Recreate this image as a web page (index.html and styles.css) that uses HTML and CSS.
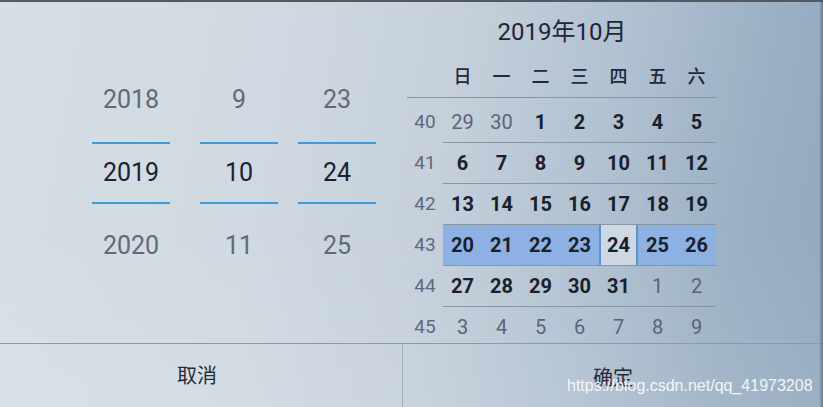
FILE: index.html
```html
<!DOCTYPE html>
<html lang="zh">
<head>
<meta charset="utf-8">
<title>日期选择</title>
<link rel="stylesheet" href="styles.css">
</head>
<body>
<div class="screen">
  <div class="topline"></div>
  <div class="main">
    <div class="pickers">
      <div class="col">
        <div class="item">2018</div>
        <div class="item sel">2019</div>
        <div class="item">2020</div>
      </div>
      <div class="col month">
        <div class="item">9</div>
        <div class="item sel">10</div>
        <div class="item">11</div>
      </div>
      <div class="col day">
        <div class="item">23</div>
        <div class="item sel">24</div>
        <div class="item">25</div>
      </div>
    </div>
    <div class="calendar">
      <div class="title">2019年10月</div>
      <div class="head">
        <div class="wk"></div>
        <div class="days">
          <span>日</span><span>一</span><span>二</span><span>三</span><span>四</span><span>五</span><span>六</span>
        </div>
      </div>
      <div class="week first">
        <div class="wk">40</div>
        <div class="days">
          <span class="other">29</span><span class="other">30</span><span>1</span><span>2</span><span>3</span><span>4</span><span>5</span>
        </div>
      </div>
      <div class="week">
        <div class="wk">41</div>
        <div class="days">
          <span>6</span><span>7</span><span>8</span><span>9</span><span>10</span><span>11</span><span>12</span>
        </div>
      </div>
      <div class="week">
        <div class="wk">42</div>
        <div class="days">
          <span>13</span><span>14</span><span>15</span><span>16</span><span>17</span><span>18</span><span>19</span>
        </div>
      </div>
      <div class="week current">
        <div class="wk">43</div>
        <div class="days">
          <span>20</span><span>21</span><span>22</span><span>23</span><span class="today">24</span><span>25</span><span>26</span>
        </div>
      </div>
      <div class="week">
        <div class="wk">44</div>
        <div class="days">
          <span>27</span><span>28</span><span>29</span><span>30</span><span>31</span><span class="other">1</span><span class="other">2</span>
        </div>
      </div>
      <div class="week last">
        <div class="wk">45</div>
        <div class="days">
          <span class="other">3</span><span class="other">4</span><span class="other">5</span><span class="other">6</span><span class="other">7</span><span class="other">8</span><span class="other">9</span>
        </div>
      </div>
    </div>
  </div>
  <div class="footer">
    <div class="btn cancel">取消</div>
    <div class="btn ok">确定</div>
  </div>
  <div class="watermark">https://blog.csdn.net/qq_41973208</div>
  <div class="bezel"></div>
</div>
</body>
</html>
```

FILE: styles.css
```css
html, body {
  margin: 0;
  padding: 0;
}

body {
  width: 823px;
  height: 407px;
  overflow: hidden;
  font-family: Roboto, "Noto Sans CJK SC", "Noto Sans", sans-serif;
}

.screen {
  position: relative;
  width: 823px;
  height: 407px;
  display: flex;
  flex-direction: column;
  background:
    linear-gradient(to bottom, rgba(255,255,255,0) 55%, rgba(255,255,255,0.10) 100%),
    linear-gradient(100deg, #d7dee5 0%, #d0d9e1 32%, #c5d0db 52%, #afc0d0 72%, #9aafc4 88%, #91a7bd 100%);
}

.topline {
  height: 2px;
  background: #525961;
  flex: none;
}

.main {
  display: flex;
  height: 341px;
  flex: none;
  overflow: hidden;
}

/* ---------- wheel pickers ---------- */
.pickers {
  width: 406px;
  flex: none;
  display: flex;
  padding: 77px 0 0 92px;
  box-sizing: border-box;
}

.col {
  width: 78px;
  display: flex;
  flex-direction: column;
  align-items: stretch;
}

.col.month {
  margin: 0 20px 0 30px;
}

.item {
  height: 42px;
  line-height: 42px;
  text-align: center;
  font-size: 25px;
  color: #626a75;
}

.item.sel {
  margin: 21px 0;
  height: 62px;
  line-height: 58px;
  box-sizing: border-box;
  border-top: 2px solid #3f9bd6;
  border-bottom: 2px solid #3f9bd6;
  color: #1d2130;
}

/* ---------- calendar ---------- */
.calendar {
  flex: 1;
  padding-top: 14px;
  padding-left: 1px;
}

.title {
  width: 310px;
  text-align: center;
  height: 32px;
  line-height: 32px;
  font-size: 24px;
  color: #20253a;
}

.head {
  display: flex;
  width: 310px;
  margin-top: 8px;
  height: 41px;
  border-bottom: 1px solid #8a95a2;
}

.head .days span {
  font-size: 18px;
  font-weight: 500;
  color: #23283a;
  line-height: 41px;
}

.wk {
  width: 36px;
  flex: none;
  text-align: center;
  font-size: 19px;
  color: #5e6880;
  line-height: 40px;
}

.days {
  display: flex;
  width: 273px;
  flex: none;
}

.days span {
  width: 39px;
  flex: none;
  text-align: center;
  box-sizing: border-box;
}

.week {
  display: flex;
  height: 41px;
}

.week.first {
  height: 45px;
}

.week.first .wk,
.week.first .days {
  padding-top: 4px;
}

.week .days {
  border-bottom: 1px solid #8a95a2;
}

.week.last {
  height: 37px;
}

.week.last .days {
  border-bottom: none;
}

.week .days span {
  font-size: 20px;
  font-weight: 700;
  color: #1b1f2d;
  line-height: 40px;
}

.week .days span.other {
  font-weight: 400;
  color: #5a6479;
}

.week.current .days span {
  background: #8db1e2;
}

.week.current .days span.today {
  background: #cdd8e3;
  border-left: 2px solid #5a93cc;
  border-right: 2px solid #5a93cc;
}

/* ---------- footer ---------- */
.footer {
  flex: 1;
  display: flex;
  border-top: 1px solid #8f99a4;
}

.btn {
  display: flex;
  align-items: center;
  justify-content: center;
  font-size: 20px;
  color: #262a36;
  padding-bottom: 2px;
}

.btn.cancel {
  width: 403px;
  flex: none;
  border-right: 1px solid #a3adb8;
  padding-right: 8px;
  box-sizing: border-box;
}

.btn.ok {
  flex: 1;
  padding-top: 4px;
}

.watermark {
  position: absolute;
  left: 567px;
  top: 377px;
  font-family: "Liberation Sans", Arial, sans-serif;
  font-size: 16px;
  color: #f3f5f8;
}

.bezel {
  position: absolute;
  right: 0;
  top: 0;
  width: 3px;
  height: 407px;
  background: linear-gradient(to right, rgba(70,90,110,0.2), rgba(60,80,100,0.55));
}
```
